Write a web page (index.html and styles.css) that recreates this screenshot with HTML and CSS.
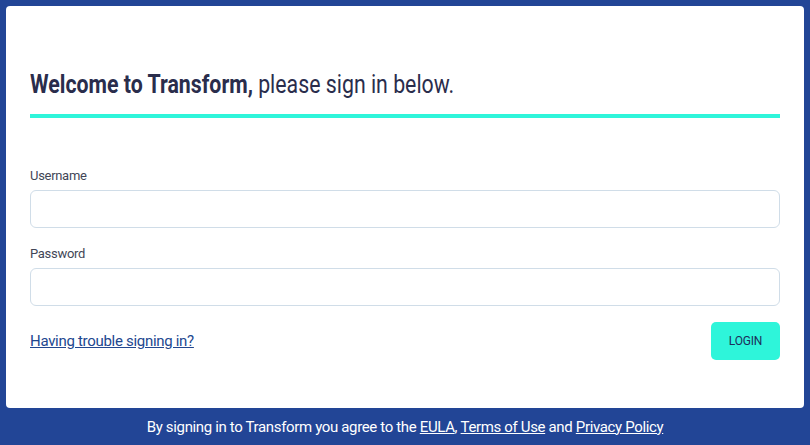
FILE: index.html
```html
<!DOCTYPE html>
<html>
<head>
<meta charset="utf-8">
<link rel="stylesheet" href="styles.css">
</head>
<body>
<div class="page">
  <main class="card">
    <h1 class="title"><span class="title-text"><strong>Welcome to Transform,</strong> please sign in below.</span></h1>
    <form class="form">
      <label class="field">
        <span class="label">Username</span>
        <input class="input" type="text">
      </label>
      <label class="field">
        <span class="label">Password</span>
        <input class="input" type="password">
      </label>
      <div class="actions">
        <a class="help" href="#">Having trouble signing in?</a>
        <button class="login" type="button">LOGIN</button>
      </div>
    </form>
  </main>
  <footer class="footer">By signing in to Transform you agree to the <a href="#">EULA</a>, <a href="#">Terms of Use</a> and <a href="#">Privacy Policy</a></footer>
</div>
</body>
</html>
```
FILE: styles.css
```css
* { box-sizing: border-box; }
html, body { margin: 0; padding: 0; }
body {
  background: #224596;
  font-family: Roboto, "Liberation Sans", sans-serif;
  width: 810px;
  height: 445px;
  overflow: hidden;
}
.page {
  padding: 6px 6px 0 6px;
  display: flex;
  flex-direction: column;
}
.card {
  background: #fff;
  border-radius: 4px;
  height: 402px;
  padding: 64px 24px 0 24px;
}
.title {
  margin: 0;
  font-size: 25px;
  font-weight: 400;
  color: #2a2d4c;
  line-height: 30px;
  padding-bottom: 14px;
  border-bottom: 4px solid #2ef5da;
  white-space: nowrap;
}
.title-text {
  display: inline-block;
  transform: scaleX(0.852);
  transform-origin: left center;
}
.title strong { font-weight: 700; }
.form {
  padding-top: 50px;
  display: flex;
  flex-direction: column;
}
.field {
  display: flex;
  flex-direction: column;
  margin-bottom: 18px;
}
.label {
  font-size: 13px;
  color: #424656;
  line-height: 16px;
  letter-spacing: -0.3px;
  margin-bottom: 6px;
}
.input {
  height: 38px;
  border: 1px solid #d0dde8;
  border-radius: 6px;
  background: #fff;
  outline: none;
}
.actions {
  display: flex;
  justify-content: space-between;
  align-items: center;
  margin-top: -2px;
}
.help {
  font-size: 15px;
  color: #22478f;
  letter-spacing: -0.3px;
}
.login {
  width: 69px;
  height: 38px;
  border: none;
  border-radius: 5px;
  background: #2ef5da;
  color: #1d2f5a;
  font-family: Roboto, sans-serif;
  font-size: 12px;
  letter-spacing: -0.2px;
}
.footer {
  height: 37px;
  display: flex;
  align-items: center;
  justify-content: center;
  color: #fff;
  font-size: 15px;
  letter-spacing: -0.35px;
  white-space: pre;
}
.footer a { color: #fff; }
```
